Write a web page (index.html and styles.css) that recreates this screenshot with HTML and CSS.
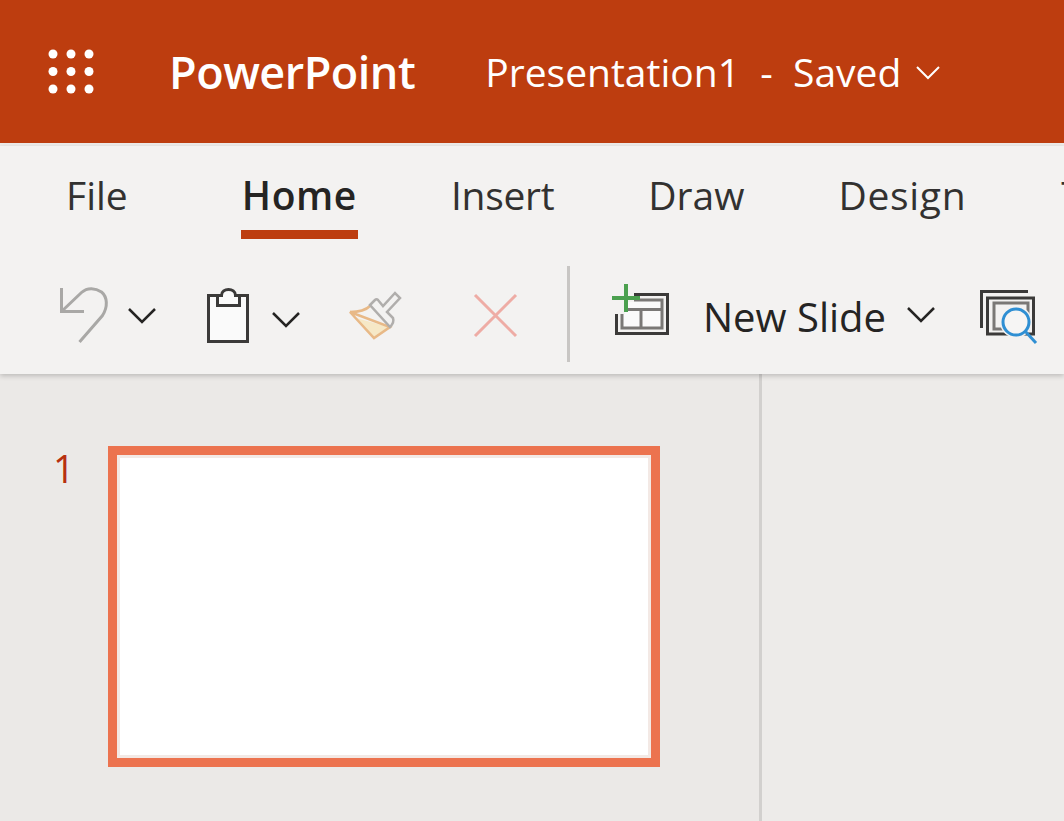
FILE: index.html
```html
<!DOCTYPE html>
<html lang="en">
<head>
  <meta charset="UTF-8">
  <title>Presentation1 - PowerPoint</title>
  <link rel="stylesheet" href="styles.css">
</head>
<body>
  <header class="titlebar">
    <svg class="waffle" viewBox="0 0 46 46" width="46" height="46" fill="#fff">
      <circle cx="5" cy="5" r="4.5"/><circle cx="23" cy="5" r="4.5"/><circle cx="41" cy="5" r="4.5"/>
      <circle cx="5" cy="22.500" r="4.5"/><circle cx="23" cy="22.500" r="4.5"/><circle cx="41" cy="22.500" r="4.5"/>
      <circle cx="5" cy="40" r="4.5"/><circle cx="23" cy="40" r="4.5"/><circle cx="41" cy="40" r="4.5"/>
    </svg>
    <span class="app-name">PowerPoint</span>
    <span class="doc-name">Presentation1&nbsp; - &nbsp;Saved</span>
    <svg class="doc-chevron" viewBox="0 0 24 14" width="24" height="14" fill="none" stroke="#fff" stroke-width="2"><path d="M1 1l11 11L23 1"/></svg>
  </header>

  <section class="ribbon">
    <nav class="tabs">
      <a class="tab tab-file">File</a>
      <a class="tab active">Home</a>
      <a class="tab tab-insert">Insert</a>
      <a class="tab">Draw</a>
      <a class="tab tab-design">Design</a>
      <a class="tab">Transitions</a>
    </nav>

    <div class="tools">
      <svg class="icon undo" viewBox="56 284 54 64" width="54" height="64" fill="none" stroke="#a9a8a6" stroke-width="3">
        <path d="M61.500 288v23.500H84"/>
        <path d="M61.500 311.500l20-19c6-5.500 14-4.500 20-.5 6 5 6.500 15 1 23.500L79.500 342"/>
      </svg>
      <svg class="icon chevron chev-undo" viewBox="0 0 30 18" width="30" height="18" fill="none" stroke="#252423" stroke-width="2.500"><path d="M2 2l13 13L28 2"/></svg>

      <svg class="icon paste" viewBox="204 284 48 64" width="48" height="64" stroke="#3b3a39" stroke-width="3">
        <path fill="#fafafa" d="M208.500 295.500h39v46h-39z"/>
        <path fill="#fafafa" d="M217.500 295.500h4c0-8 14-8 14 0h4v10h-22z"/>
      </svg>
      <svg class="icon chevron chev-paste" viewBox="0 0 30 18" width="30" height="18" fill="none" stroke="#252423" stroke-width="2.500"><path d="M2 2l13 13L28 2"/></svg>

      <svg class="icon brush" viewBox="346 284 60 64" width="60" height="64" fill="none" stroke-width="2.500">
        <path fill="#f6e8c6" stroke="none" d="M357 318l33 9-15 11z"/>
        <path stroke="#e8b987" d="M351 312c8 0 15-1 20-6"/>
        <path stroke="#e8b987" d="M351 312l40 15-16 11z"/>
        <path stroke="#b0aeac" d="M371 305l5-5c1-1 2-1 3 0l5 6 12-13 5 5-13 14 6 6c1 3 0 6-3 9z"/>
      </svg>

      <svg class="icon cut" viewBox="472 292 46 46" width="46" height="46" fill="none" stroke="#eeaca5" stroke-width="3"><path d="M475 295l41 41M516 295l-41 41"/></svg>

      <span class="sep"></span>

      <svg class="icon new-slide" viewBox="610 282 62 56" width="62" height="56" fill="none">
        <path stroke="#3b3a39" stroke-width="3" d="M616.500 294.500h51v39h-51z"/>
        <path fill="#fafafa" stroke="#7a7876" stroke-width="3" d="M622 300h40v28h-40zM622 309.500h40M641 309.500V328"/>
        <path fill="#f3f2f1" d="M610 282h24v21h-9v11h-15z"/>
        <path fill="#fafafa" d="M625 302h14v6h-14z"/>
        <path stroke="#4ba04f" stroke-width="4" d="M612 298h28M626 284v28"/>
      </svg>
      <span class="btn-label">New Slide</span>
      <svg class="icon chevron chev-slide" viewBox="0 0 30 18" width="30" height="18" fill="none" stroke="#252423" stroke-width="2.500"><path d="M2 2l13 13L28 2"/></svg>

      <svg class="icon designer" viewBox="978 288 62 58" width="62" height="58" fill="none">
        <path stroke="#3b3a39" stroke-width="3" d="M1028 291.500h-46.500V328"/>
        <path stroke="#3b3a39" stroke-width="3" d="M987.500 298h46v36h-46z"/>
        <path fill="#f3f2f1" stroke="#7a7876" stroke-width="3" d="M994 303h34v26h-34z"/>
        <circle cx="1016" cy="322" r="16" fill="#f3f2f1"/>
        <circle cx="1016" cy="322" r="13" fill="#f6f5f4" stroke="#2f8fd3" stroke-width="3"/>
        <path stroke="#2f8fd3" stroke-width="3" d="M1025 331l11 12"/>
      </svg>
    </div>
  </section>

  <main class="workspace">
    <aside class="slides-pane">
      <span class="slide-num">1</span>
      <div class="thumb"></div>
    </aside>
    <div class="editor"></div>
  </main>
</body>
</html>
```

FILE: styles.css
```css
html, body {
  margin: 0;
  height: 100%;
}

body {
  font-family: 'Open Sans', 'Noto Sans', sans-serif;
  background: #edebe9;
  color: #252423;
  overflow: hidden;
  display: flex;
  flex-direction: column;
}

.titlebar {
  height: 143px;
  flex: none;
  background: #bd3d0f;
  color: #fff;
  display: flex;
  align-items: center;
  padding-left: 48px;
}

.app-name {
  font-size: 45px;
  font-weight: 600;
  margin-left: 75px;
  letter-spacing: -0.5px;
}

.doc-name {
  font-size: 39px;
  margin-left: 70px;
  white-space: nowrap;
}

.doc-chevron {
  margin-left: 15px;
  margin-top: 2px;
}

.ribbon {
  height: 228px;
  flex: none;
  margin-top: 3px;
  background: #f3f2f1;
  box-shadow: 0 2px 5px rgba(0, 0, 0, 0.2);
  position: relative;
  z-index: 1;
}

.tabs {
  display: flex;
  gap: 94px;
  padding-left: 66px;
  height: 93px;
  white-space: nowrap;
  overflow: hidden;
}

.tab {
  font-size: 39px;
  line-height: 50px;
  padding-top: 24px;
  height: 60px;
  color: #323130;
}

.tab-file {
  margin-right: 20px;
}

.tab-insert {
  letter-spacing: -0.3px;
}

.tab-design {
  letter-spacing: 0.7px;
  margin-right: 1px;
}

.tab.active {
  font-weight: 600;
  color: #252423;
  letter-spacing: 0.6px;
  padding: 24px 1px 0;
  margin: 0 -1px;
  border-bottom: 9px solid #bd3d0f;
}

.tools {
  display: flex;
  align-items: center;
  height: 116px;
  margin-top: 19px;
  white-space: nowrap;
}

.icon {
  flex: none;
  display: block;
}

.undo { margin-left: 56px; }
.chev-undo { margin-left: 17px; }
.paste { margin-left: 47px; }
.chev-paste { margin-left: 19px; margin-top: 8px; }
.brush { margin-left: 44px; }
.cut { margin-left: 67px; margin-top: -2px; }

.sep {
  width: 3px;
  height: 96px;
  background: #c8c6c4;
  margin-left: 49px;
  margin-top: -4px;
}

.new-slide { margin-left: 40px; margin-top: -12px; }

.btn-label {
  font-size: 40px;
  margin-left: 31px;
  color: #252423;
}

.chev-slide { margin-left: 20px; margin-top: -2px; }
.designer { margin-left: 42px; margin-top: 2px; }

.workspace {
  flex: 1;
  display: flex;
  min-height: 0;
}

.slides-pane {
  box-sizing: border-box;
  border-right: 3px solid #d2d0ce;
  width: 762px;
  flex: none;
  background: #ebe9e7;
  display: flex;
  align-items: flex-start;
  padding: 72px 0 0 53px;
}

.slide-num {
  font-size: 38px;
  line-height: 44px;
  width: 55px;
  color: #b7300f;
}

.thumb {
  width: 552px;
  height: 321px;
  box-sizing: border-box;
  background: #fff;
  border: 9px solid #ec734f;
  outline: 3px solid #f3e9e5;
  outline-offset: -12px;
}

.editor {
  flex: 1;
  background: #edebe9;
}
```
